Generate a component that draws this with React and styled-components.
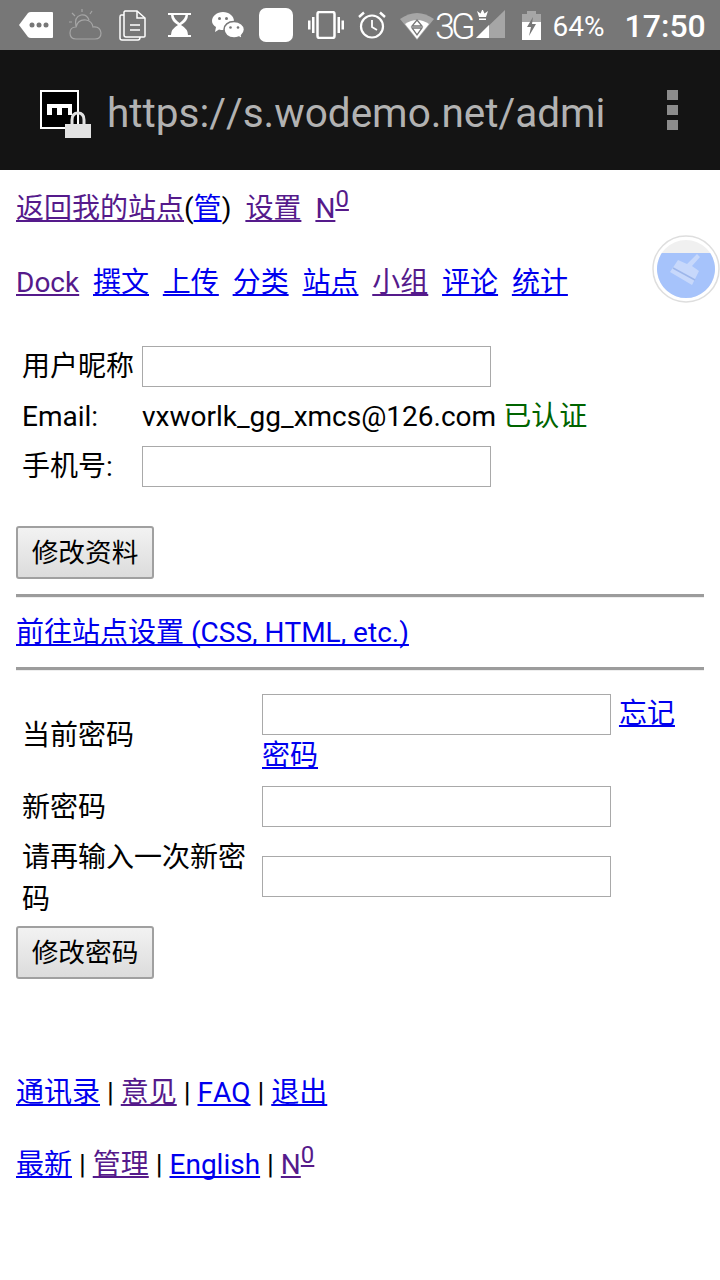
import React from 'react';
import styled, { createGlobalStyle } from 'styled-components';

const Global = createGlobalStyle`
  html, body { margin: 0; padding: 0; background: #fff; }
  body {
    font-family: Roboto, "Noto Sans CJK SC", sans-serif;
    font-size: 28px;
    line-height: 42px;
    color: #000;
    font-kerning: none;
  }
`;

const StatusBar = styled.div`
  height: 50px;
  background: #777;
  display: flex;
  align-items: center;
  padding-left: 19px;
  color: #fff;
  overflow: hidden;
`;

const Slot = styled.span`
  display: flex;
  flex: none;
  margin-left: ${p => p.$ml || 0}px;
  svg { display: block; }
`;

const NetText = styled.span`
  flex: none;
  margin-left: ${p => p.$ml || 0}px;
  padding-top: ${p => p.$drop || 0}px;
  font-size: ${p => p.$size}px;
  font-weight: ${p => p.$weight || 400};
  line-height: 46px;
  letter-spacing: ${p => p.$track || 0}px;
`;

const UrlBar = styled.div`
  height: 120px;
  background: #141414;
  display: flex;
  align-items: center;
  padding-left: 40px;
`;

const SiteIcon = styled.div`
  position: relative;
  flex: none;
  width: 39px;
  height: 39px;
  margin-top: -2px;
  box-sizing: border-box;
  border: 2px solid #fff;
  background: #000;
  svg { display: block; }
`;

const Lock = styled.span`
  position: absolute;
  left: 22px;
  top: 19px;
  svg { display: block; }
`;

const UrlText = styled.div`
  flex: none;
  margin-left: 28px;
  padding-top: 5px;
  font-size: 40.5px;
  line-height: 50px;
  color: #b2b2b2;
  width: 510px;
  white-space: nowrap;
`;

const Kebab = styled.div`
  flex: none;
  margin-left: 50px;
  display: flex;
  flex-direction: column;
  gap: 5px;
  i {
    display: block;
    width: 11px;
    height: 10px;
    background: #8c8c8c;
  }
`;

const Page = styled.main`
  position: relative;
  padding: 18px 16px 0;
`;

const Line = styled.p`
  margin: ${p => p.$top || 0}px 0 0;
  height: 42px;
  white-space: nowrap;
`;

const Link = styled.a`
  color: ${p => (p.$visited ? '#551a8b' : '#0000ee')};
  text-decoration: underline;
  text-decoration-skip-ink: none;
  margin-left: ${p => p.$before || 0}px;
  margin-right: ${p => p.$gap || 0}px;
`;

const Sup = styled.sup`
  display: inline-block;
  font-size: 24px;
  line-height: 16px;
  vertical-align: 11px;
  color: #551a8b;
  text-decoration: underline;
  text-decoration-skip-ink: none;
`;

const Bubble = styled.div`
  position: absolute;
  left: 652px;
  top: 65px;
  width: 68px;
  height: 68px;
  svg { display: block; }
`;

const FormTable = styled.table`
  border-collapse: collapse;
  margin: ${p => p.$top || 0}px 0 0;
`;

const Row = styled.tr`
  height: ${p => p.$h}px;
`;

const LabelCell = styled.td`
  padding: ${p => p.$nudge || 4}px 0 0 6px;
  width: ${p => p.$w}px;
  box-sizing: border-box;
  vertical-align: middle;
`;

const FieldCell = styled.td`
  padding: ${p => p.$nudge || 0}px 0 0;
  width: ${p => p.$w || 'auto'};
  vertical-align: middle;
  white-space: ${p => (p.$nowrap ? 'nowrap' : 'normal')};
`;

const Input = styled.input`
  display: inline-block;
  width: 349px;
  height: 41px;
  box-sizing: border-box;
  padding: 0 4px;
  margin: 0;
  border: 1px solid #a9a9a9;
  background: #fff;
  vertical-align: middle;
`;

const InlineInput = styled(Input)`
  vertical-align: 4px;
`;

const ForgotLink = styled(Link)`
  margin-left: 1px;
`;

const Verified = styled.span`
  color: #006400;
  margin-left: 7px;
`;

const Button = styled.button`
  display: block;
  width: 138px;
  height: 53px;
  margin: ${p => p.$top || 0}px 0 0;
  padding: 0 0 4px;
  box-sizing: border-box;
  border: 2px solid #a0a0a0;
  border-radius: 3px;
  background: linear-gradient(#f2f2f2, #dcdcdc);
  font-family: Roboto, "Noto Sans CJK SC", sans-serif;
  font-size: 26.67px;
  color: #000;
`;

const Rule = styled.hr`
  margin: ${p => p.$top || 0}px 0 0;
  height: 4px;
  box-sizing: border-box;
  border: 0;
  border-top: 3px solid #9c9c9c;
  border-bottom: 1px solid #eee;
`;

const TagIcon = () => (
  <svg width="35" height="26" viewBox="0 0 35 26">
    <path d="M0 13 L9 1 Q10 0 12 0 H33 Q34 0 34 1 V25 Q34 26 33 26 H12 Q10 26 9 25 Z" fill="#fff" />
    <circle cx="13" cy="13" r="2.5" fill="#777" />
    <circle cx="20" cy="13" r="2.5" fill="#777" />
    <circle cx="27" cy="13" r="2.5" fill="#777" />
  </svg>
);

const CloudIcon = () => (
  <svg width="34" height="32" viewBox="0 0 34 32" fill="none" stroke="#a6a6a6" strokeWidth="1.2">
    <path d="M8 30 Q2 30 2 24 Q2 18 8 18 Q10 10 18 11 Q24 12 25 18 Q32 17 33 24 Q33 30 27 30 Z" />
    <path d="M8 17 Q6 8 13 6 Q19 5 21 11" />
    <path d="M14 0 L14 3 M4 4 L7 7 M24 2 L22 5 M1 13 L4 13" />
  </svg>
);

const DocsIcon = () => (
  <svg width="27" height="31" viewBox="0 0 27 31" fill="none" stroke="#fff" strokeWidth="1.5">
    <path d="M6 1 H18 L26 8 V26 Q26 27 25 27 H7 Q5 27 5 25 V2 Z" />
    <path d="M18 1 V8 H26" />
    <path d="M5 5 H2 Q1 5 1 7 V28 Q1 30 3 30 H19 Q21 30 21 27" />
    <path d="M11 15 H21 M11 20 H21" />
  </svg>
);

const GlassIcon = () => (
  <svg width="23" height="24" viewBox="0 0 23 24">
    <path d="M0 0 H23 V2 H20 Q20 8 13 12 Q20 16 20 22 H23 V24 H0 V22 H3 Q3 16 10 12 Q3 8 3 2 H0 Z" fill="#fff" />
    <path d="M5.5 2 H17.5 Q17 6 11.500 10 Q6 6 5.500 2 Z" fill="#777" />
  </svg>
);

const ChatIcon = () => (
  <svg width="33" height="27" viewBox="0 0 33 27">
    <path d="M11 0 C17 0 22 4 22 9 C22 14 17 18 11 18 Q9 18 7 17.500 L3 20 L4 15 Q0 12.500 0 9 C0 4 5 0 11 0 Z" fill="#fff" />
    <path d="M22 9.500 C28 9.500 32.500 13 32.500 17.500 C32.500 20 31 22 29.500 23.500 L30.500 27 L27 25 Q24.500 26 22 26 C16 26 12 22 12 17.500 C12 13 16 9.500 22 9.500 Z" fill="#fff" stroke="#777" strokeWidth="1.5" />
    <circle cx="7.500" cy="6.500" r="1.500" fill="#777" />
    <circle cx="14.500" cy="6.500" r="1.500" fill="#777" />
    <circle cx="18.500" cy="15.500" r="1.300" fill="#777" />
    <circle cx="26" cy="15.500" r="1.300" fill="#777" />
  </svg>
);

const BlankIcon = () => (
  <svg width="34" height="34" viewBox="0 0 34 34">
    <rect width="34" height="34" rx="7" fill="#fff" />
  </svg>
);

const VibrateIcon = () => (
  <svg width="36" height="28" viewBox="0 0 36 28" fill="#fff">
    <rect x="9.500" y="1" width="17" height="26" rx="2" fill="none" stroke="#fff" strokeWidth="2.500" />
    <rect x="4" y="6" width="2.500" height="16" />
    <rect x="29.500" y="6" width="2.500" height="16" />
    <rect x="0" y="9.500" width="2.500" height="9" />
    <rect x="33.500" y="9.500" width="2.500" height="9" />
  </svg>
);

const AlarmIcon = () => (
  <svg width="28" height="28" viewBox="0 0 28 28" fill="none" stroke="#fff" strokeWidth="2.200">
    <circle cx="14" cy="15.500" r="11" />
    <path d="M14 9 V16 L19 19" strokeWidth="1.800" />
    <path d="M1 6 L6 1.500 M27 6 L22 1.500" strokeWidth="2.400" />
  </svg>
);

const WifiIcon = () => (
  <svg width="34" height="29" viewBox="0 0 34 29">
    <path d="M0 8 Q17 -4 34 8 L17 29 Z" fill="#a6a6a6" />
    <path d="M5 13 Q17 5 29 13 L17 28 Z" fill="#fff" />
    <path d="M17 9 L22 15 H12 Z M12 17 H22 L17 24 Z" fill="none" stroke="#777" strokeWidth="1.300" />
  </svg>
);

const SignalIcon = () => (
  <svg width="30" height="30" viewBox="0 0 30 30">
    <path d="M29 0 V28 H0 Z" fill="#a6a6a6" />
    <path d="M13 15 V28 H0 Z" fill="#fff" />
    <path d="M3 8 L1 2 L4.500 4.500 L6.500 0 L8.500 4.500 L12 2 L10 8 Z M3 9.500 H10 V11 H3 Z" fill="#fff" transform="translate(0 -1)" />
  </svg>
);

const BatteryIcon = () => (
  <svg width="19" height="29" viewBox="0 0 19 29">
    <path d="M5 0 H14 V3 H19 V29 H0 V3 H5 Z" fill="#a6a6a6" />
    <path d="M0 11 H19 V29 H0 Z" fill="#fff" />
    <path d="M11 6 L5 16 H9 L7 25 L14 13 H10 Z" fill="#777" />
  </svg>
);

const MenuDots = () => (
  <Kebab><i /><i /><i /></Kebab>
);

export default function App() {
  return (
    <>
      <Global />
      <StatusBar>
        <Slot><TagIcon /></Slot>
        <Slot $ml={14}><CloudIcon /></Slot>
        <Slot $ml={17}><DocsIcon /></Slot>
        <Slot $ml={22}><GlassIcon /></Slot>
        <Slot $ml={21}><ChatIcon /></Slot>
        <Slot $ml={14}><BlankIcon /></Slot>
        <Slot $ml={15}><VibrateIcon /></Slot>
        <Slot $ml={14}><AlarmIcon /></Slot>
        <Slot $ml={14}><WifiIcon /></Slot>
        <NetText $size={36} $ml={1} $track={-4} $weight={300} $drop={3}>3G</NetText>
        <Slot $ml={4}><SignalIcon /></Slot>
        <Slot $ml={16}><BatteryIcon /></Slot>
        <NetText $size={28} $ml={12} $drop={3}>64%</NetText>
        <NetText $size={32} $ml={20} $weight={500} $drop={2}>17:50</NetText>
      </StatusBar>
      <UrlBar>
        <SiteIcon>
          <svg width="35" height="35" viewBox="0 0 35 35">
            <path d="M5 12 H30 V23 H26 V16 H20 V23 H15 V16 H10 V23 H5 Z" fill="#fff" />
          </svg>
          <Lock>
            <svg width="28" height="28" viewBox="0 0 28 28">
              <path d="M8 13 V9 Q8 2 14 2 Q20 2 20 9 V13" fill="none" stroke="#e2e2e2" strokeWidth="3" />
              <rect x="1" y="13" width="26" height="14" fill="#e2e2e2" />
            </svg>
          </Lock>
        </SiteIcon>
        <UrlText>https://s.wodemo.net/admi</UrlText>
        <MenuDots />
      </UrlBar>
      <Page>
        <Line>
          <Link $visited href="#">返回我的站点</Link>(<Link href="#">管</Link>)
          <Link $visited href="#" $before={14} $gap={14}>设置</Link>
          <Link $visited href="#">N<Sup>0</Sup></Link>
        </Line>
        <Line $top={32}>
          <Link $visited href="#" $gap={13.8}>Dock</Link>
          <Link href="#" $gap={13.8}>撰文</Link>
          <Link href="#" $gap={13.8}>上传</Link>
          <Link href="#" $gap={13.8}>分类</Link>
          <Link href="#" $gap={13.8}>站点</Link>
          <Link $visited href="#" $gap={13.8}>小组</Link>
          <Link href="#" $gap={13.8}>评论</Link>
          <Link href="#">统计</Link>
        </Line>
        <Bubble>
          <svg width="68" height="68" viewBox="0 0 68 68">
            <circle cx="34" cy="34" r="33" fill="#fff" stroke="#dedede" strokeWidth="1.500" />
            <circle cx="34" cy="34" r="29" fill="#f0f0f0" />
            <path d="M9.800 18 H58.200 A29 29 0 1 1 9.800 18 Z" fill="#a6c3fb" />
            <path d="M35 29 L45 19 L48 22 L40 31 L47 36 L40 50 L18 37 L26 25 Z" fill="#c7d8fb" />
            <path d="M21 33 L43 45" stroke="#9db6ea" strokeWidth="1.500" />
          </svg>
        </Bubble>
        <FormTable $top={36}>
          <tbody>
            <Row $h={50}>
              <LabelCell $w={126}>用户昵称</LabelCell>
              <FieldCell><Input /></FieldCell>
            </Row>
            <Row $h={50}>
              <LabelCell $w={126}>Email:</LabelCell>
              <FieldCell $nowrap $nudge={4}>vxworlk_gg_xmcs@126.com<Verified>已认证</Verified></FieldCell>
            </Row>
            <Row $h={50}>
              <LabelCell $w={126}>手机号:</LabelCell>
              <FieldCell><Input /></FieldCell>
            </Row>
          </tbody>
        </FormTable>
        <Button $top={36}>修改资料</Button>
        <Rule $top={15} />
        <Line $top={14}>
          <Link href="#">前往站点设置 (CSS, HTML, etc.)</Link>
        </Line>
        <Rule $top={13} />
        <FormTable $top={17}>
          <tbody>
            <Row $h={94}>
              <LabelCell $w={246} $nudge={2}>当前密码</LabelCell>
              <FieldCell $w="430px">
                <InlineInput /> <ForgotLink href="#">忘记密码</ForgotLink>
              </FieldCell>
            </Row>
            <Row $h={47}>
              <LabelCell $w={246}>新密码</LabelCell>
              <FieldCell $w="430px"><Input /></FieldCell>
            </Row>
            <Row $h={92}>
              <LabelCell $w={246} $nudge={8}>请再输入一次新密码</LabelCell>
              <FieldCell $w="430px"><Input /></FieldCell>
            </Row>
          </tbody>
        </FormTable>
        <Button $top={5}>修改密码</Button>
        <Line $top={93}>
          <Link href="#">通讯录</Link> | <Link $visited href="#">意见</Link> | <Link href="#">FAQ</Link> | <Link href="#">退出</Link>
        </Line>
        <Line $top={30}>
          <Link href="#">最新</Link> | <Link $visited href="#">管理</Link> | <Link href="#">English</Link> | <Link $visited href="#">N<Sup>0</Sup></Link>
        </Line>
      </Page>
    </>
  );
}
